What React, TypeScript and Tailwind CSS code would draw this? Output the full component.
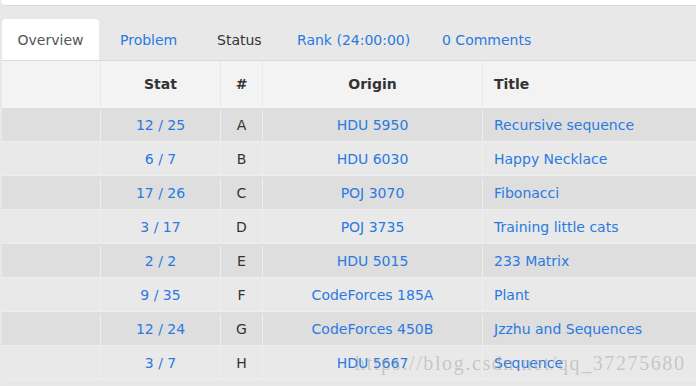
import React from "react";

const rows = [
  { stat: "12 / 25", id: "A", origin: "HDU 5950", title: "Recursive sequence" },
  { stat: "6 / 7", id: "B", origin: "HDU 6030", title: "Happy Necklace" },
  { stat: "17 / 26", id: "C", origin: "POJ 3070", title: "Fibonacci" },
  { stat: "3 / 17", id: "D", origin: "POJ 3735", title: "Training little cats" },
  { stat: "2 / 2", id: "E", origin: "HDU 5015", title: "233 Matrix" },
  { stat: "9 / 35", id: "F", origin: "CodeForces 185A", title: "Plant" },
  { stat: "12 / 24", id: "G", origin: "CodeForces 450B", title: "Jzzhu and Sequences" },
  { stat: "3 / 7", id: "H", origin: "HDU 5667", title: "Sequence" },
];

// widths keep each tab label where the original page put it
const tabs = [
  { label: "Overview", active: true, cls: "text-[#555] w-[97px] justify-center" },
  { label: "Problem", cls: "text-[#2a7ae2] w-[92px]" },
  { label: "Status", cls: "text-[#333] w-[75px]" },
  { label: "Rank (24:00:00)", cls: "text-[#2a7ae2] w-[140px]" },
  { label: "0 Comments", cls: "text-[#2a7ae2]" },
];

export default function App() {
  return (
    <div className="relative w-[696px] h-[386px] overflow-hidden bg-[#e8e8e8] font-['DejaVu_Sans',Verdana,sans-serif] text-[14px]">
      {/* top panel edge */}
      <div className="h-[6px] ml-[1px] bg-white border-b border-[#dcdcdc] rounded-bl-[4px]" />

      {/* Tabs */}
      <div className="flex mt-[13px] pl-[2px] h-[41px]">
        {tabs.map((t) => (
          <div
            key={t.label}
            className={`px-4 pt-[2px] mr-[5px] flex items-center whitespace-nowrap rounded-t-[4px] ${t.cls} ${
              t.active ? "bg-white" : ""
            }`}
          >
            {t.label}
          </div>
        ))}
      </div>

      {/* Table */}
      <div className="ml-[2px] border-t border-[#dadada]">
        <div className="grid grid-cols-[99px_120px_42px_220px_1fr] h-[47px] bg-[#f3f3f3] font-bold text-[#333] border-b border-[#f7f7f7]">
          <div className="border-r border-[#e9e9e9]" />
          <div className="flex items-center justify-center border-r border-[#e9e9e9]">Stat</div>
          <div className="flex items-center justify-center border-r border-[#e9e9e9]">#</div>
          <div className="flex items-center justify-center border-r border-[#e9e9e9]">Origin</div>
          <div className="flex items-center pl-[11px]">Title</div>
        </div>
        {rows.map((r, i) => (
          <div
            key={r.id}
            className={`grid grid-cols-[99px_120px_42px_220px_1fr] h-[34px] pt-[2px] border-b border-[#eeeeee] ${
              i % 2 === 0 ? "bg-[#dedede]" : "bg-[#e9e9e9]"
            }`}
          >
            <div className="border-r border-[#efefef]" />
            <div className="flex items-center justify-center text-[#2a7ae2] border-r border-[#efefef]">{r.stat}</div>
            <div className="flex items-center justify-center text-[#333] border-r border-[#efefef]">{r.id}</div>
            <div className="flex items-center justify-center text-[#2a7ae2] border-r border-[#efefef]">{r.origin}</div>
            <div className="flex items-center pl-[11px] text-[#2a7ae2]">{r.title}</div>
          </div>
        ))}
      </div>

      {/* watermark */}
      <div className="absolute left-[355px] top-[348px] font-['Liberation_Serif',serif] text-[20px] text-[#999]/45 tracking-[1.6px] whitespace-nowrap pointer-events-none">
        https://blog.csdn.net/qq_37275680
      </div>
    </div>
  );
}
